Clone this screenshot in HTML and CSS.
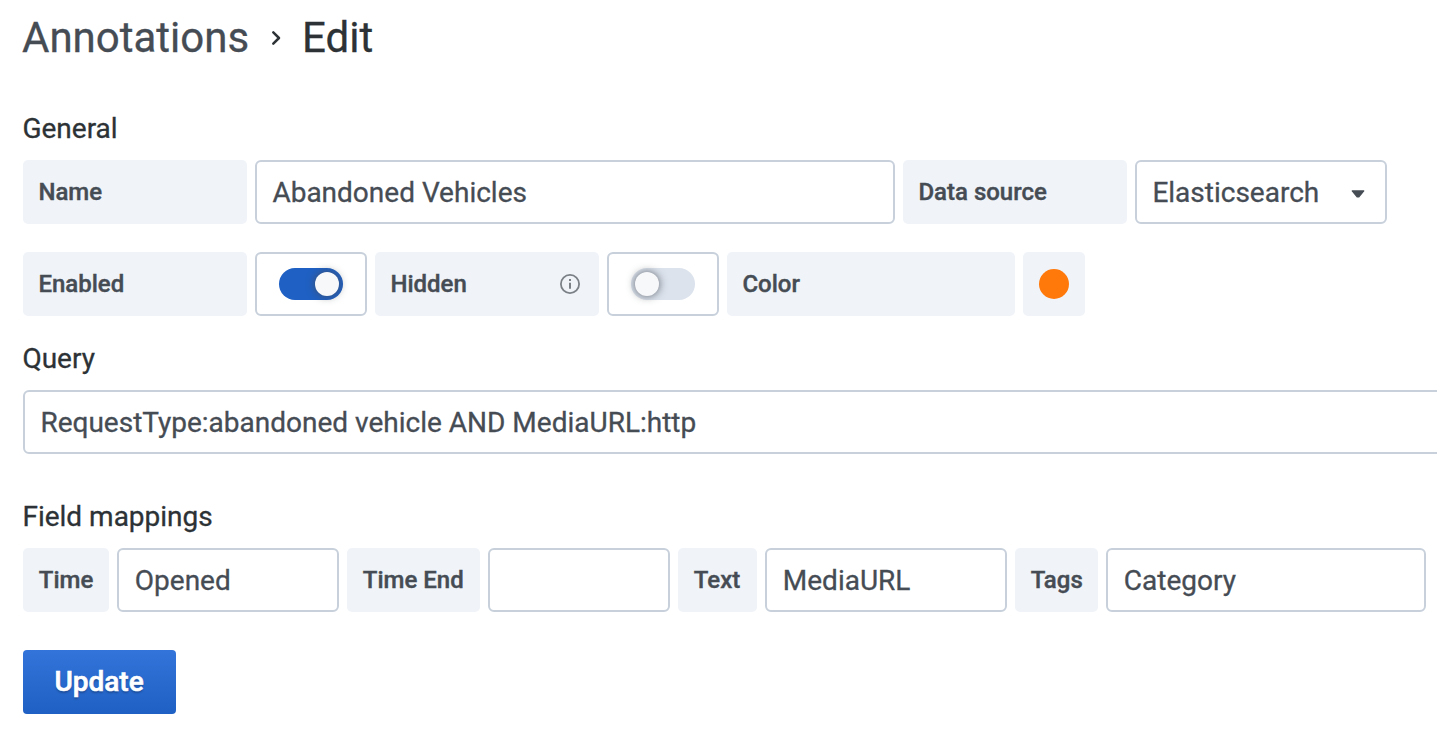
FILE: index.html
```
<!DOCTYPE html>
<html lang="en">
<head>
<meta charset="utf-8">
<title>Annotations - Edit</title>
<link rel="stylesheet" href="styles.css">
</head>
<body>
<main class="page">
  <h1 class="title"><span class="title-parent">Annotations</span><svg class="title-sep" width="10" height="16" viewBox="0 0 10 16"><path d="M2.3 2.4L8 8L2.3 13.6" fill="none" stroke="#2c3235" stroke-width="2.5" stroke-linecap="round" stroke-linejoin="round"/></svg><span>Edit</span></h1>

  <h2 class="heading heading-general"><span>General</span></h2>
  <div class="row row-general">
    <label class="label w-224"><span>Name</span></label>
    <div class="input w-640"><span>Abandoned Vehicles</span></div>
    <label class="label w-224"><span>Data source</span></label>
    <div class="input select"><span>Elasticsearch</span><svg class="caret" width="14" height="8" viewBox="0 0 14 8"><path d="M1.2 .9H12.8L7.7 7H6.3Z" fill="#464c54" stroke="#464c54" stroke-width="1.2" stroke-linejoin="round"/></svg></div>
  </div>
  <div class="row row-options">
    <label class="label w-224"><span>Enabled</span></label>
    <div class="switch"><div class="track track-on"><i class="knob"></i></div></div>
    <label class="label w-224"><span>Hidden</span><svg class="info" width="22" height="22" viewBox="0 0 22 22"><circle cx="11" cy="11" r="9.1" fill="none" stroke="#7b8087" stroke-width="1.8"/><path d="M11 9.8v6M11 6v2" stroke="#7b8087" stroke-width="2"/></svg></label>
    <div class="switch"><div class="track"><i class="knob"></i></div></div>
    <label class="label w-288"><span>Color</span></label>
    <div class="swatch"><i class="dot"></i></div>
  </div>

  <h2 class="heading heading-query"><span>Query</span></h2>
  <div class="row row-query">
    <div class="input query"><span>RequestType:abandoned vehicle AND MediaURL:http</span></div>
  </div>

  <h2 class="heading heading-map"><span>Field mappings</span></h2>
  <div class="row row-map">
    <label class="label w-86"><span>Time</span></label>
    <div class="input w-222"><span>Opened</span></div>
    <label class="label w-133"><span>Time End</span></label>
    <div class="input w-182"></div>
    <label class="label w-79"><span>Text</span></label>
    <div class="input w-242"><span>MediaURL</span></div>
    <label class="label w-83"><span>Tags</span></label>
    <div class="input w-320"><span>Category</span></div>
  </div>
  <button class="update"><span>Update</span></button>
</main>
</body>
</html>
```
FILE: styles.css
```
* { box-sizing: border-box; }
body { margin: 0; background: #fff; color: #2c3235; font-family: Roboto, sans-serif; overflow: hidden; -webkit-text-stroke: .3px currentColor; }
.page { height: 733px; padding: 14px 0 0 23px; overflow: hidden; }
.title { display: flex; align-items: center; height: 48px; margin: 0 0 0 -1px; font-size: 42px; font-weight: 400; line-height: 48px; }
.title-parent { color: #464c54; }
.title-sep { margin: 0 21px 0 22px; }
.heading { display: flex; align-items: center; height: 32px; margin: 0 0 15px -.6px; font-size: 28px; font-weight: 400; line-height: 32px; }
.heading-general { margin-top: 51px; }
.heading-query { margin-top: 27px; }
.heading-map { margin-top: 47px; }
.row { display: flex; gap: 8px; height: 64px; }
.row-options { margin-top: 28px; }
.label { display: flex; flex: none; align-items: center; justify-content: space-between; padding: 0 18px 0 15.4px; border-radius: 5px; background: #f0f4f9; color: #464c54; font-size: 24px; font-weight: 500; white-space: nowrap; -webkit-text-stroke-width: .4px; }
.row-map .label { padding: 0 0 0 15.8px; }
.input { display: flex; flex: none; align-items: center; padding: 0 15.4px; border: 2px solid #c7d0db; border-radius: 6px; background: #fff; color: #464c54; font-size: 28px; white-space: nowrap; }
.row-map .input { padding: 0 15.8px; }
.select { justify-content: space-between; width: 252px; padding: 0 20px 0 15.4px; }
.caret { margin-top: 3px; }
.query { width: 1480px; }
.w-79 { width: 79px; }
.w-83 { width: 83px; }
.w-86 { width: 86px; }
.w-133 { width: 133px; }
.w-182 { width: 182px; }
.w-222 { width: 222px; }
.w-224 { width: 224px; }
.w-242 { width: 242px; }
.w-288 { width: 288px; }
.w-320 { width: 320px; }
.w-640 { width: 640px; }
.switch { display: flex; flex: none; align-items: center; justify-content: center; width: 112px; border: 2px solid #c7d0db; border-radius: 6px; }
.track { display: flex; align-items: center; width: 64px; height: 32px; padding: 0 4px; border-radius: 16px; background: #dce3ed; }
.track-on { justify-content: flex-end; background: #1f60c4; }
.knob { width: 24px; height: 24px; border-radius: 50%; background: #f7f8fa; box-shadow: 0 0 8px rgba(70, 76, 84, .85); }
.swatch { display: flex; flex: none; align-items: center; justify-content: center; width: 62px; border-radius: 5px; background: #f0f4f9; }
.dot { width: 30px; height: 30px; border-radius: 50%; background: #ff780a; }
.update { display: block; width: 153px; height: 64px; margin: 38px 0 0; padding: 0 1px 0 0; border: 0; border-radius: 4px; background: linear-gradient(#3274d9, #1f60c4); color: #fff; font: 500 28px/64px Roboto, sans-serif; text-shadow: 0 2px 2px rgba(0, 0, 0, .25); -webkit-text-stroke: .6px currentColor; }
```
